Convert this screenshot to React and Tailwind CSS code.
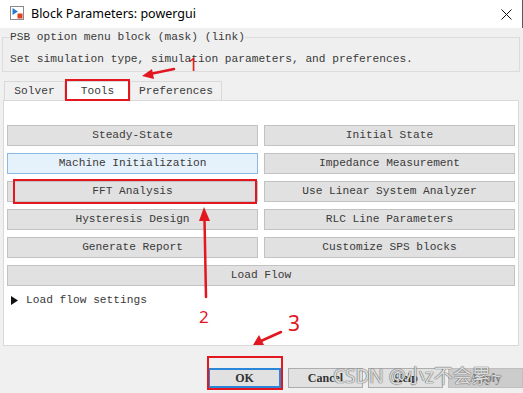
const mono = "font-['Liberation_Mono',monospace] text-[11.2px] text-[#3a3a3a]";

const leftButtons = [
  "Steady-State",
  "Machine Initialization",
  "FFT Analysis",
  "Hysteresis Design",
  "Generate Report",
];
const rightButtons = [
  "Initial State",
  "Impedance Measurement",
  "Use Linear System Analyzer",
  "RLC Line Parameters",
  "Customize SPS blocks",
];

function ToolButton({ label, focused }) {
  return (
    <div
      className={`h-[21px] flex items-center justify-center border ${
        focused ? "bg-[#e5f1fb] border-[#8ab9e6]" : "bg-[#e1e1e1] border-[#c2c2c2]"
      } ${mono}`}
    >
      {label}
    </div>
  );
}

function BlockIcon() {
  return (
    <svg width="14" height="14" viewBox="0 0 14 14">
      <rect x="0.5" y="0.5" width="13" height="13" fill="#fff" stroke="#8a8a8a" />
      <path d="M2.5 2 L8 5.5 L2.5 9 Z" fill="#2a78c8" />
      <rect x="7.5" y="7.5" width="5" height="5" fill="#e2401c" />
    </svg>
  );
}

export default function App() {
  const rows = leftButtons.map((l, i) => [l, rightButtons[i]]);

  return (
    <div className="relative w-[523px] h-[393px] overflow-hidden bg-[#f0f0f0]">
      {/* title bar */}
      <div className="h-[28px] bg-white flex items-center border-r border-[#5a5a5a]">
        <div className="ml-[10px] mt-[-2px]">
          <BlockIcon />
        </div>
        <span className="ml-[7px] font-['Noto_Sans',sans-serif] text-[12.5px] text-black">
          Block Parameters: powergui
        </span>
        <svg className="ml-auto mr-[10px]" width="11" height="11" viewBox="0 0 11 11">
          <path d="M0.5 0.5 L10.5 10.5 M10.5 0.5 L0.5 10.5" stroke="#111" strokeWidth="1" />
        </svg>
      </div>

      {/* mask description */}
      <fieldset className="mx-[2px] mt-[2px] w-[518px] h-[42px] border border-[#dcdcdc] bg-[#efefef]">
        <legend className={`ml-[7px] leading-[14px] ${mono}`}>
          PSB option menu block (mask) (link)
        </legend>
        <div className={`ml-[7px] mt-[8px] leading-[14px] ${mono}`}>
          Set simulation type, simulation parameters, and preferences.
        </div>
      </fieldset>

      {/* tabs */}
      <div className="mt-[9px] ml-[4px] flex h-[19px]">
        <div className={`w-[61px] flex items-center justify-center border border-b-0 border-[#d9d9d9] ${mono}`}>
          Solver
        </div>
        <div className={`w-[65px] flex items-center justify-center bg-white border-t border-[#d9d9d9] ${mono}`}>
          Tools
        </div>
        <div className={`w-[92px] flex items-center justify-center border border-b-0 border-[#d9d9d9] ${mono}`}>
          Preferences
        </div>
      </div>

      {/* tab panel */}
      <div className="ml-[3px] w-[516px] h-[246px] bg-white border border-[#d9d9d9] px-[3px] pt-[24px]">
        <div className="grid grid-cols-2 gap-x-[6px] gap-y-[7px]">
          {rows.map(([l, r]) => (
            <div key={l} className="contents">
              <ToolButton label={l} focused={l === "Machine Initialization"} />
              <ToolButton label={r} />
            </div>
          ))}
          <div className="col-span-2">
            <ToolButton label="Load Flow" />
          </div>
        </div>
        <div className="mt-[7px] ml-[4px] flex items-center h-[14px]">
          <svg width="7" height="9" viewBox="0 0 7 9">
            <path d="M0 0 L7 4.5 L0 9 Z" fill="#111" />
          </svg>
          <span className={`ml-[8px] ${mono}`}>Load flow settings</span>
        </div>
      </div>

      {/* bottom buttons */}
      <div className="mt-[22px] ml-[208px] flex h-[20px] font-['Liberation_Serif',serif] text-[12px] text-[#333]">
        <div className="w-[73px] flex items-center justify-center bg-[#e1e1e1] border-2 border-[#2a86d8] font-bold">
          OK
        </div>
        <div className="ml-[7px] w-[75px] flex items-center justify-center bg-[#e1e1e1] border border-[#adadad] font-bold">
          Cancel
        </div>
        <div className="ml-[5px] w-[75px] flex items-center justify-center bg-[#e1e1e1] border border-[#adadad] font-bold">
          Help
        </div>
        <div className="ml-[5px] w-[75px] flex items-center justify-center bg-[#cccccc] border border-[#bfbfbf] text-[#838383] font-bold">
          Apply
        </div>
      </div>

      {/* annotations */}
      <div className="absolute left-[65px] top-[79px] w-[65px] h-[22px] border-2 border-[#e3171f]" />
      <div className="absolute left-[13px] top-[179px] w-[244px] h-[25px] border-2 border-[#e3171f]" />
      <div className="absolute left-[207px] top-[356px] w-[76px] h-[34px] border-2 border-[#e3171f]" />

      <svg className="absolute left-0 top-0" width="523" height="393" viewBox="0 0 523 393">
        <g stroke="#e3171f" strokeWidth="2.5" fill="#e3171f" strokeLinecap="round">
          <line x1="174" y1="69" x2="150" y2="74" />
          <path d="M142 76 L152 69 L154 79 Z" stroke="none" />
          <line x1="206" y1="297" x2="204.5" y2="218" />
          <path d="M204 207 L199 221 L210 221 Z" stroke="none" />
          <line x1="281" y1="332" x2="261" y2="341" />
          <path d="M253 345 L259 335 L264 345 Z" stroke="none" />
        </g>
      </svg>
      <span className="absolute left-[188px] top-[53px] font-['Noto_Sans',sans-serif] text-[18px] leading-[22px] text-[#e3171f]">
        1
      </span>
      <span className="absolute left-[199px] top-[306px] font-['Noto_Sans',sans-serif] text-[17px] leading-[22px] text-[#e3171f]">
        2
      </span>
      <span className="absolute left-[288px] top-[310px] font-['Noto_Sans',sans-serif] text-[21px] leading-[26px] text-[#e3171f]">
        3
      </span>

      <span className="absolute left-[333px] top-[364px] font-['Noto_Sans','Noto_Sans_CJK_SC',sans-serif] text-[19px] leading-[24px] text-[#eeeeee]/90 [text-shadow:0_0_1px_#555,0_0_1px_#555]">
        CSDN @小z不会累~
      </span>
    </div>
  );
}
